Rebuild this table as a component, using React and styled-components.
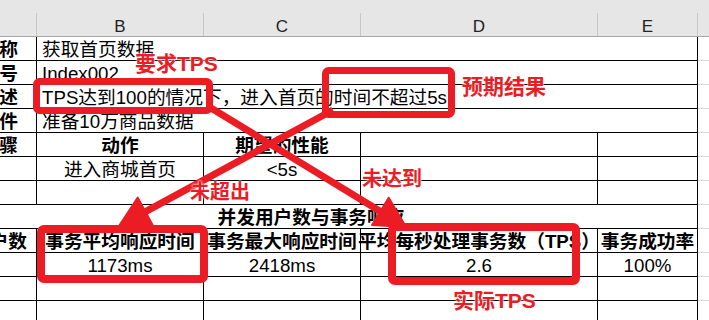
import React from "react";
import styled, { createGlobalStyle } from "styled-components";

const RED = "#ec1c24";
// column A starts off-screen (sheet is scrolled right by 75px)
const COLS = "112px 167px 157px 237px 100px 1fr";

const GlobalStyle = createGlobalStyle`
  html, body {
    margin: 0;
    padding: 0;
    background: #fff;
  }
  body {
    overflow: hidden;
  }
  * {
    box-sizing: border-box;
  }
`;

const Sheet = styled.div`
  position: relative;
  width: 709px;
  height: 320px;
  overflow: hidden;
  background: #fff;
  font-family: "Liberation Sans", "Noto Sans CJK SC", sans-serif;
  color: #000;
`;

const TopStrip = styled.div`
  height: 13px;
  background: #e6e6e6;
`;

const ColHeads = styled.div`
  display: grid;
  grid-template-columns: ${COLS};
  margin-left: -75px;
  height: 24px;
  background: #e6e6e6;
  border-bottom: 1px solid #a8a8a8;
`;

const ColHead = styled.div`
  display: flex;
  align-items: flex-end;
  justify-content: center;
  border-right: ${({ $last }) => ($last ? "none" : "1px solid #c6c6c6")};
  font-size: 17px;
  line-height: 1;
  color: #222;
  padding-bottom: 1px;
`;

const Grid = styled.div`
  display: grid;
  grid-template-columns: ${COLS};
  grid-auto-rows: 24px;
  margin-left: -75px;
`;

const Cell = styled.div`
  grid-column: ${({ $span }) => ($span ? `span ${$span}` : "auto")};
  display: flex;
  align-items: center;
  justify-content: ${({ $left }) => ($left ? "flex-start" : "center")};
  padding: 3px 0 0 ${({ $left }) => ($left ? "5px" : "0")};
  border-right: 1px solid #000;
  border-bottom: 1px solid #000;
  font-size: 18.7px;
  font-weight: ${({ $bold }) => ($bold ? 700 : 400)};
  white-space: nowrap;
  line-height: 1;
`;

// row title in column A: only its tail is on screen
const LabelCell = styled(Cell)`
  justify-content: flex-end;
  padding-right: ${({ $pad }) => $pad}px;
  font-weight: 700;
`;

const Filler = styled.div`
  border-bottom: 1px solid #d9d9d9;
`;

const Overlay = styled.svg`
  position: absolute;
  left: 0;
  top: 0;
  width: 709px;
  height: 320px;
  pointer-events: none;
`;

const Note = styled.div`
  position: absolute;
  left: ${({ $x }) => $x}px;
  top: ${({ $y }) => $y}px;
  font-family: "Liberation Sans", "Noto Sans CJK SC", sans-serif;
  font-size: ${({ $size }) => $size || 20}px;
  font-weight: 700;
  line-height: 1;
  color: ${RED};
  white-space: nowrap;
  text-shadow: 0 0 2px #fff, 0 0 2px #fff;
`;

function Arrow({ x1, y1, x2, y2, len = 30, half = 16, w = 7 }) {
  const dx = x2 - x1;
  const dy = y2 - y1;
  const d = Math.hypot(dx, dy);
  const ux = dx / d;
  const uy = dy / d;
  const bx = x2 - ux * len;
  const by = y2 - uy * len;
  const head = [
    [x2, y2],
    [bx - uy * half, by + ux * half],
    [bx + uy * half, by - ux * half],
  ]
    .map((p) => p.join(","))
    .join(" ");
  return (
    <g fill={RED} stroke={RED}>
      <line x1={x1} y1={y1} x2={bx + ux * 4} y2={by + uy * 4} strokeWidth={w} />
      <polygon points={head} strokeWidth="2" strokeLinejoin="round" />
    </g>
  );
}

const Box = ({ x, y, w, h, sw }) => (
  <rect x={x} y={y} width={w} height={h} rx="3" fill="none" stroke={RED} strokeWidth={sw} />
);

function Row({ label = "", pad = 18, cells }) {
  return (
    <>
      <LabelCell $pad={pad}>{label}</LabelCell>
      {cells}
      <Filler />
    </>
  );
}

const Empty = () => (
  <>
    <Cell />
    <Cell />
    <Cell />
    <Cell />
  </>
);

export default function App() {
  return (
    <>
      <GlobalStyle />
      <Sheet>
        <TopStrip />
        <ColHeads>
          <ColHead />
          <ColHead>B</ColHead>
          <ColHead>C</ColHead>
          <ColHead>D</ColHead>
          <ColHead>E</ColHead>
          <ColHead $last />
        </ColHeads>
        <Grid>
          <Row label="称" cells={<Cell $span={4} $left>获取首页数据</Cell>} />
          <Row label="号" cells={<Cell $span={4} $left>Index002</Cell>} />
          <Row
            label="述"
            cells={<Cell $span={4} $left>TPS达到100的情况下，进入首页的时间不超过5s</Cell>}
          />
          <Row label="件" cells={<Cell $span={4} $left>准备10万商品数据</Cell>} />
          <Row
            label="骤"
            cells={
              <>
                <Cell $bold>动作</Cell>
                <Cell $bold>期望的性能</Cell>
                <Cell />
                <Cell />
              </>
            }
          />
          <Row
            cells={
              <>
                <Cell>进入商城首页</Cell>
                <Cell>&lt;5s</Cell>
                <Cell />
                <Cell />
              </>
            }
          />
          <Row cells={<Empty />} />
          <Cell $span={5} $bold>并发用户数与事务响应</Cell>
          <Filler />
          <Row
            label="户数"
            pad={9}
            cells={
              <>
                <Cell $bold>事务平均响应时间</Cell>
                <Cell $bold>事务最大响应时间</Cell>
                <Cell $bold>平均每秒处理事务数（TPS）</Cell>
                <Cell $bold>事务成功率</Cell>
              </>
            }
          />
          <Row
            cells={
              <>
                <Cell>1173ms</Cell>
                <Cell>2418ms</Cell>
                <Cell>2.6</Cell>
                <Cell>100%</Cell>
              </>
            }
          />
          <Row cells={<Empty />} />
          <Row cells={<Empty />} />
        </Grid>

        <Overlay viewBox="0 0 709 320">
          <Box x={36.5} y={81.5} w={173} h={29} sw={7} />
          <Box x={325.5} y={70.5} w={126} h={44} sw={7} />
          <Box x={41} y={229} w={163} h={50} sw={8} />
          <Box x={392} y={227} w={184} h={54} sw={8} />
          <Arrow x1={333} y1={110} x2={119} y2={226} />
          <Arrow x1={211} y1={108} x2={406} y2={227} />
        </Overlay>

        <Note $x={135} $y={53} $size={21}>要求TPS</Note>
        <Note $x={462} $y={76} $size={21}>预期结果</Note>
        <Note $x={190} $y={182}>未超出</Note>
        <Note $x={362} $y={169}>未达到</Note>
        <Note $x={453} $y={290} $size={21}>实际TPS</Note>
      </Sheet>
    </>
  );
}
